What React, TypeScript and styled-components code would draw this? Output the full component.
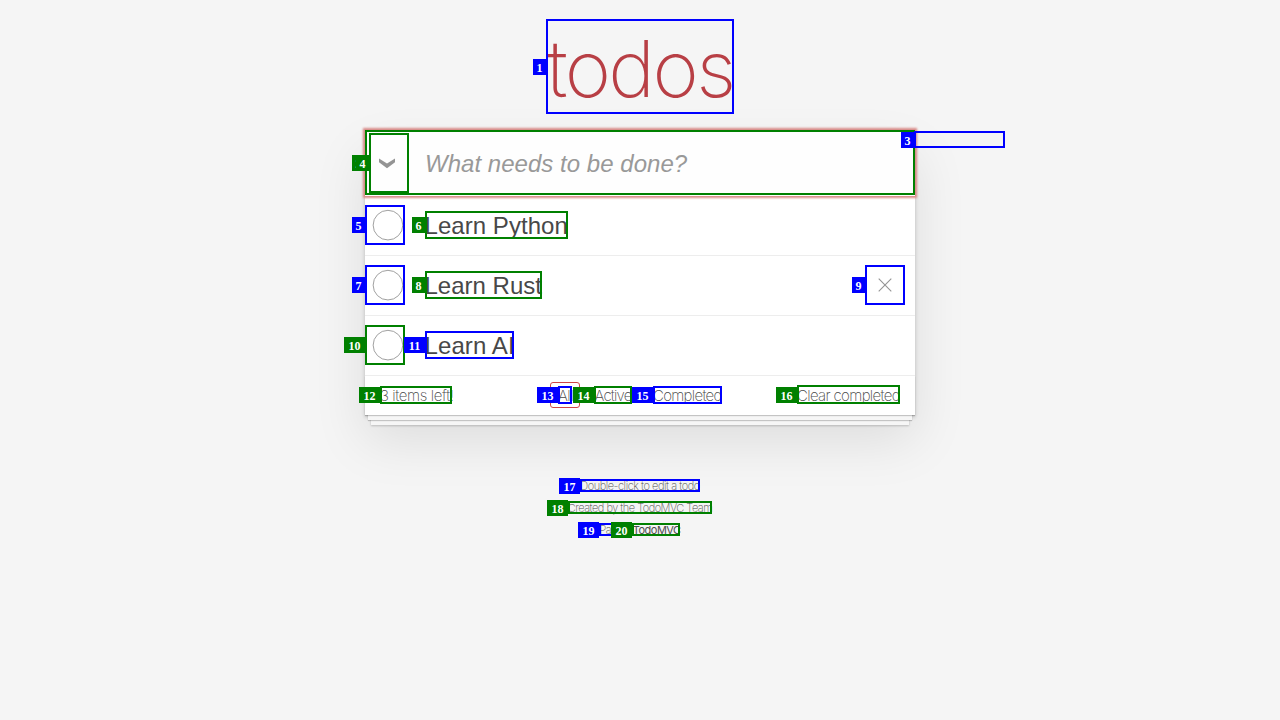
import React from 'react';
import styled, { createGlobalStyle } from 'styled-components';

const GlobalStyle = createGlobalStyle`
  * { box-sizing: border-box; }
  body {
    margin: 0;
    background: #f5f5f5;
    color: #484848;
    font-family: "Liberation Sans", Arial, sans-serif;
    overflow: hidden;
  }
`;

const thin = `font-family: Inter, "Liberation Sans", sans-serif;`;

const Page = styled.div`
  position: relative;
  width: 1280px;
  height: 720px;
  display: flex;
  flex-direction: column;
  align-items: center;
`;

const Title = styled.h1`
  ${thin}
  height: 130px;
  margin: 0;
  padding-top: 18px;
  font-size: 79px;
  font-weight: 200;
  line-height: 100px;
  letter-spacing: -2.6px;
  color: #b83f45;
  white-space: nowrap;
`;

const Card = styled.section`
  width: 550px;
  height: 285px;
  display: flex;
  flex-direction: column;
  background: #fff;
  box-shadow: 0 2px 4px rgba(0, 0, 0, 0.2), 0 25px 50px rgba(0, 0, 0, 0.1);
`;

const EntryRow = styled.div`
  position: relative;
  z-index: 1;
  display: flex;
  align-items: center;
  height: 65.5px;
  background: #fefefe;
  box-shadow: 0 0 2px 1.7px #d98b89;
`;

const ToggleAll = styled.div`
  width: 43px;
  height: 65px;
  padding-top: 2px;
  display: flex;
  align-items: center;
  justify-content: center;
`;

const Placeholder = styled.div`
  padding: 2px 0 0 17px;
  font-size: 24px;
  font-style: italic;
  letter-spacing: 0.03px;
  color: #999;
`;

const List = styled.ul`
  list-style: none;
  margin: 0;
  padding: 0.5px 0 0;
`;

const Item = styled.li`
  display: flex;
  align-items: center;
  height: 60px;
  padding-bottom: 1px;
  border-bottom: 1px solid #ededed;
`;

const ItemLabel = styled.span<{ $spacing: number }>`
  flex: 1;
  padding-left: 19.5px;
  padding-top: 2px;
  font-size: 24px;
  letter-spacing: ${(p) => p.$spacing}px;
`;

const Remove = styled.div`
  width: 40px;
  height: 40px;
  margin-right: 10px;
  display: flex;
  align-items: center;
  justify-content: center;
`;

const Footer = styled.footer`
  ${thin}
  flex: 1;
  display: grid;
  grid-template-columns: 170px 1fr 118px;
  align-items: center;
  padding-left: 15px;
  font-size: 15px;
  font-weight: 200;
  box-shadow: 0 1px 1px rgba(0, 0, 0, 0.2), 0 8px 0 -3px #f6f6f6,
    0 9px 1px -3px rgba(0, 0, 0, 0.2), 0 16px 0 -6px #f6f6f6,
    0 17px 2px -6px rgba(0, 0, 0, 0.2);
`;

const FootText = styled.span<{ $spacing: number }>`
  letter-spacing: ${(p) => p.$spacing}px;
  white-space: nowrap;
`;

const Filters = styled.div`
  display: flex;
  align-items: center;
  gap: 7px;
  padding-bottom: 1px;
`;

const Filter = styled.span<{ $selected?: boolean; $width: number; $spacing: number }>`
  width: ${(p) => p.$width}px;
  height: 26px;
  padding-left: 7px;
  line-height: 26px;
  border: 1px solid ${(p) => (p.$selected ? '#ce4646' : 'transparent')};
  border-radius: 3px;
  letter-spacing: ${(p) => p.$spacing}px;
  white-space: nowrap;
`;

const Info = styled.div`
  ${thin}
  display: flex;
  flex-direction: column;
  align-items: center;
  margin-top: 60px;
  font-size: 11px;
  font-weight: 200;
  line-height: 22px;
  color: #4d4d4d;
`;

const InfoLine = styled.p<{ $spacing: number }>`
  margin: 0;
  letter-spacing: ${(p) => p.$spacing}px;
  white-space: pre;
`;

const InfoLink = styled.span`
  font-weight: 400;
  letter-spacing: -0.5px;
`;

const Frame = styled.div<{ $x: number; $y: number; $w: number; $h: number; $color: string }>`
  position: absolute;
  z-index: 2;
  left: ${(p) => p.$x}px;
  top: ${(p) => p.$y}px;
  width: ${(p) => p.$w}px;
  height: ${(p) => p.$h}px;
  border: 2px solid ${(p) => p.$color};
`;

const Tag = styled.span<{ $color: string; $wide: boolean }>`
  position: absolute;
  right: calc(100% + 2px);
  top: 50%;
  margin-top: -8px;
  width: ${(p) => (p.$wide ? 21 : 13)}px;
  height: 16px;
  background: ${(p) => p.$color};
  color: #fff;
  font: bold 12px/19px "Liberation Serif", serif;
  text-align: center;
`;

const blue = '#0000ff';
const green = '#008000';

type Mark = [id: number, x: number, y: number, w: number, h: number, color: string];

const marks: Mark[] = [
  [1, 546, 19, 188, 95, blue],
  [2, 365, 130, 550, 65, green],
  [3, 914, 131, 91, 17, blue],
  [4, 369, 133, 40, 60, green],
  [5, 365, 205, 40, 40, blue],
  [6, 425, 211, 143, 28, green],
  [7, 365, 265, 40, 40, blue],
  [8, 425, 271, 117, 28, green],
  [9, 865, 265, 40, 40, blue],
  [10, 365, 325, 40, 40, green],
  [11, 425, 331, 89, 28, blue],
  [12, 380, 386, 72, 18, green],
  [13, 558, 386, 14, 18, blue],
  [14, 594, 386, 38, 18, green],
  [15, 653, 386, 69, 18, blue],
  [16, 797, 385, 103, 19, green],
  [17, 580, 479, 120, 13, blue],
  [18, 568, 501, 144, 13, green],
  [19, 599, 523, 34, 13, blue],
  [20, 632, 523, 48, 13, green],
];

const items = [
  { text: 'Learn Python', spacing: 0.05 },
  { text: 'Learn Rust', spacing: 0 },
  { text: 'Learn AI', spacing: 0.1 },
];

const removableItem = 'Learn Rust';

const Circle = () => (
  <svg width="40" height="40" viewBox="-10 -18 100 135">
    <circle cx="50" cy="50" r="50" fill="none" stroke="#949494" strokeWidth="3" />
  </svg>
);

export default function App() {
  return (
    <Page>
      <GlobalStyle />
      <Title>todos</Title>
      <Card>
        <EntryRow>
          <ToggleAll>
            <svg width="16" height="11" viewBox="0 0 16 11">
              <path d="M0 0.5 L8 5.5 L16 0.5 V4.2 L8 10.3 L0 4.2Z" fill="#949494" />
            </svg>
          </ToggleAll>
          <Placeholder>What needs to be done?</Placeholder>
        </EntryRow>
        <List>
          {items.map((item) => (
            <Item key={item.text}>
              <Circle />
              <ItemLabel $spacing={item.spacing}>{item.text}</ItemLabel>
              {item.text === removableItem && (
                <Remove>
                  <svg width="14" height="14" viewBox="0 0 14 14">
                    <path d="M0.7 0.7 L13.3 13.3 M13.3 0.7 L0.7 13.3" stroke="#949494" strokeWidth="1.1" />
                  </svg>
                </Remove>
              )}
            </Item>
          ))}
        </List>
        <Footer>
          <FootText $spacing={-0.4}>3 items left!</FootText>
          <Filters>
            <Filter $selected $width={29.5} $spacing={-0.5}>All</Filter>
            <Filter $width={51.5} $spacing={-0.8}>Active</Filter>
            <Filter $width={86} $spacing={-0.7}>Completed</Filter>
          </Filters>
          <FootText $spacing={-0.65}>Clear completed</FootText>
        </Footer>
      </Card>
      <Info>
        <InfoLine $spacing={-0.45}>Double-click to edit a todo</InfoLine>
        <InfoLine $spacing={-0.5}>Created by the TodoMVC Team</InfoLine>
        <InfoLine $spacing={-0.3}>
          Part of <InfoLink>TodoMVC</InfoLink>
        </InfoLine>
      </Info>
      {marks.map(([id, x, y, w, h, color]) => (
        <Frame key={id} $x={x} $y={y} $w={w} $h={h} $color={color}>
          <Tag $color={color} $wide={id > 9}>{id}</Tag>
        </Frame>
      ))}
    </Page>
  );
}
